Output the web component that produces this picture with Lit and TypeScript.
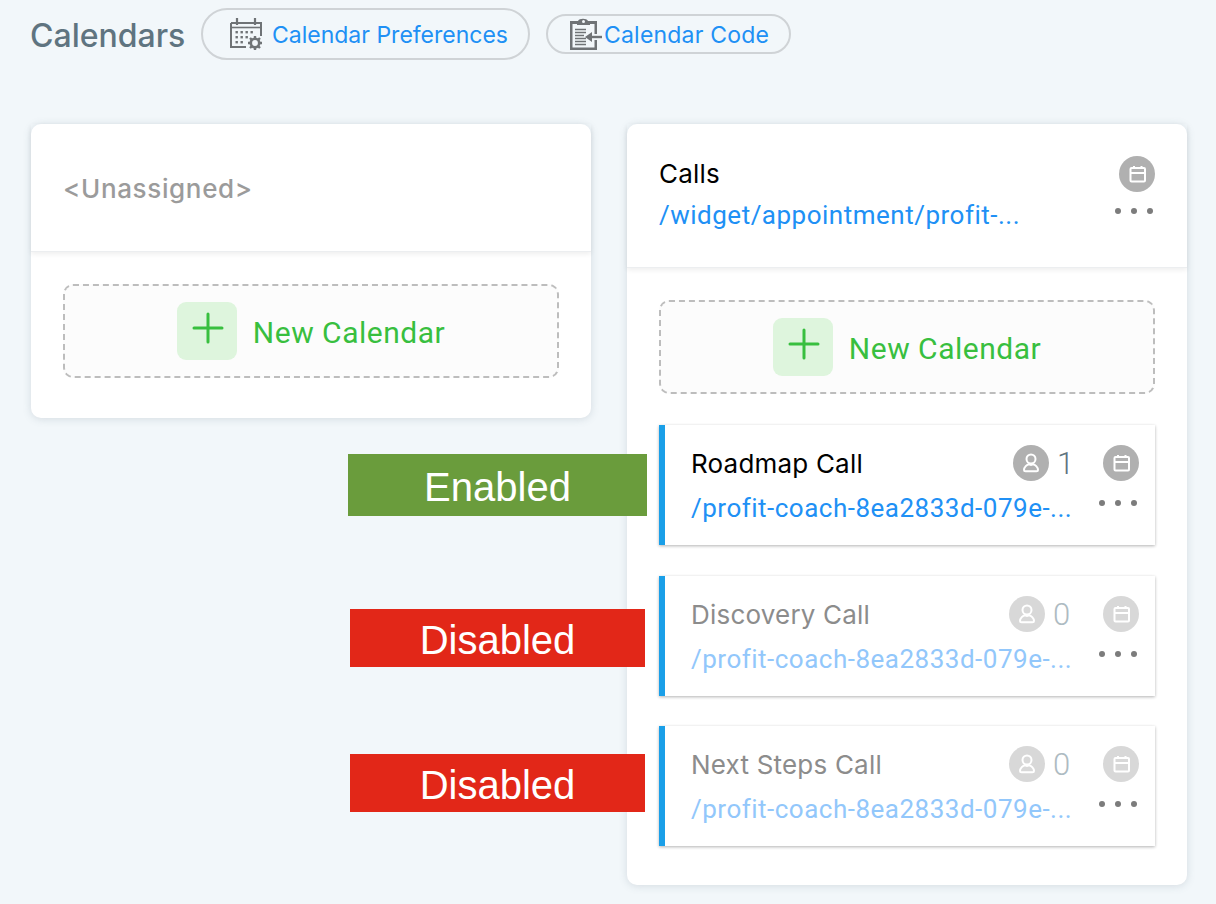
import { LitElement, html, css, svg } from "lit";
import { customElement } from "lit/decorators.js";

const calGlyph = svg`<rect x="11.5" y="12" width="14.500" height="13.500" rx="1" fill="none" stroke="#fff" stroke-width="2"/><path d="M11.5 17h14.500" stroke="#fff" stroke-width="2"/><path d="M15 10v3M22.500 10v3" stroke="#fff" stroke-width="2"/>`;

const calCircle = html`<svg class="circle" viewBox="0 0 36 36"><circle cx="18" cy="18" r="18" class="disc"/>${calGlyph}</svg>`;
const personCircle = html`<svg class="circle" viewBox="0 0 36 36"><circle cx="18" cy="18" r="18" class="disc"/><circle cx="18" cy="14" r="4.500" fill="none" stroke="#fff" stroke-width="2"/><path d="M11 25c0-3 3-5.500 5-5.800l2 .8 2-.8c2 .3 5 2.800 5 5.800 0 .8-.8 1.200-1.500 1.200h-11c-.7 0-1.500-.4-1.500-1.200z" fill="none" stroke="#fff" stroke-width="2"/></svg>`;
const dots = html`<svg class="dots" viewBox="0 0 38 6"><circle cx="3" cy="3" r="3"/><circle cx="19" cy="3" r="3"/><circle cx="35" cy="3" r="3"/></svg>`;

const gridDots: number[][] = [];
for (let r = 0; r < 3; r++) for (let c = 0; c < 4; c++) if (!(r === 2 && c > 1) && !(r === 1 && c > 2)) gridDots.push([5.5 + c * 5, 13 + r * 5]);

const prefIcon = html`<svg class="pref" viewBox="0 0 33 32" width="33" height="32">
  <path d="M1 5h30v13M1 5v24h15" fill="none" stroke="#6f7376" stroke-width="2"/>
  <path d="M1 9.500h30" stroke="#6f7376" stroke-width="1.600"/>
  <path d="M7 0v7M25 0v7" stroke="#6f7376" stroke-width="2.200"/>
  ${gridDots.map((p) => svg`<rect x="${p[0]}" y="${p[1]}" width="2.400" height="2.400" fill="#6f7376"/>`)}
  <circle cx="25" cy="25" r="4.200" fill="none" stroke="#6f7376" stroke-width="2.600"/>
  <path d="M25 18v3M25 29v3M18 25h3M29 25h3M20 20l2.200 2.200M27.800 27.800l2.200 2.200M30 20l-2.200 2.200M22.200 27.800L20 30" stroke="#6f7376" stroke-width="2.400"/>
</svg>`;

const codeIcon = html`<svg class="code" viewBox="0 0 33 32" width="33" height="32">
  <path d="M0 3h8c1-3 9-3 10 0h9v13h-2.500V6H2.500v23.500h22V22H27v10H0z" fill="#6f7376"/>
  <path d="M7 3h13v4H7z" fill="#6f7376"/>
  <circle cx="13.500" cy="3.500" r="1.500" fill="#f2f7fa"/>
  <path d="M5 11.500h11M5 14.500h11M5 17.500h9M5 20.500h11M5 23.500h11M5 26.500h11" stroke="#6f7376" stroke-width="1.400"/>
  <path d="M19 19h13" stroke="#6f7376" stroke-width="2.400"/>
  <path d="M15 19l7-5v10z" fill="#6f7376"/>
</svg>`;

@customElement("app-root")
export class AppRoot extends LitElement {
  static styles = css`
    :host {
      display: block;
      position: relative;
      width: 1216px;
      height: 904px;
      overflow: hidden;
      background: #f2f7fa;
      font-family: Inter, "Liberation Sans", sans-serif;
    }
    .top {
      display: flex;
      align-items: center;
      height: 52px;
      padding: 8px 0 0 30px;
    }
    h1 {
      margin: 2px 16px 0 0;
      font-size: 32px;
      font-weight: 500;
      color: #5f7480;
      font-family: Inter, sans-serif;
      width: 155px;
      white-space: nowrap;
    }
    .pill {
      display: flex;
      align-items: center;
      box-sizing: border-box;
      border: 2px solid #cfd3d6;
      border-radius: 30px;
      color: #2090f5;
      font-size: 23px;
      white-space: nowrap;
    }
    .pill span {
      margin-top: 2px;
    }
    .pill.a {
      width: 329px;
      height: 52px;
      padding-left: 27px;
      gap: 9px;
    }
    .pill.b {
      width: 245px;
      height: 40px;
      margin-left: 16px;
      padding-left: 22px;
      gap: 1px;
      letter-spacing: 0.2px;
    }
    .cols {
      display: grid;
      grid-template-columns: 560px 560px;
      gap: 36px;
      align-items: start;
      padding: 64px 0 0 31px;
    }
    .card {
      background: #fff;
      border-radius: 10px;
      box-shadow: 0 1px 8px rgba(90, 110, 125, 0.2);
    }
    .head {
      box-sizing: border-box;
      display: flex;
      padding: 0 32px;
      border-bottom: 1px solid #eceef0;
      box-shadow: 0 2px 5px rgba(0, 0, 0, 0.07);
    }
    .head.short {
      height: 128px;
      align-items: center;
    }
    .head.tall {
      height: 144px;
      align-items: flex-start;
      padding-top: 32px;
    }
    .unassigned {
      font-size: 26px;
      font-weight: 500;
      letter-spacing: 0.65px;
      color: #9b9b9b;
      margin-top: 2px;
    }
    .body {
      padding: 32px 32px 40px;
      display: flex;
      flex-direction: column;
      gap: 31px;
    }
    .body.tall {
      padding-bottom: 39px;
    }
    .new {
      box-sizing: border-box;
      height: 94px;
      border: 2px dashed #bdbdbd;
      border-radius: 10px;
      background: #fcfcfc;
      display: flex;
      align-items: center;
      justify-content: center;
      gap: 16px;
      color: #38bf3f;
      font-family: Roboto, sans-serif;
      font-size: 30px;
      letter-spacing: 0.5px;
    }
    .new span {
      margin-top: 2px;
    }
    .plus {
      width: 60px;
      height: 58px;
      border-radius: 9px;
      background: #def5dd;
      display: block;
    }
    .text {
      flex: 1;
      min-width: 0;
      display: flex;
      flex-direction: column;
    }
    .title {
      font-size: 26px;
      line-height: 30px;
      font-weight: 400;
      letter-spacing: 0.2px;
      color: #000;
      white-space: nowrap;
    }
    .link {
      font-family: Roboto, sans-serif;
      font-size: 26px;
      letter-spacing: 0.5px;
      line-height: 32px;
      color: #2090f5;
      white-space: nowrap;
    }
    .head .text {
      gap: 10px;
      margin-top: 3px;
    }
    .side {
      display: flex;
      flex-direction: column;
      align-items: flex-end;
      gap: 16px;
    }
    .item .side {
      gap: 19px;
    }
    .circle {
      width: 36px;
      height: 36px;
      display: block;
    }
    .disc {
      fill: #b0b0b0;
    }
    .dots {
      width: 38px;
      height: 6px;
      display: block;
      fill: #7c7c7c;
      margin-right: 2px;
    }
    .items {
      display: flex;
      flex-direction: column;
      gap: 30px;
    }
    .item {
      box-sizing: border-box;
      height: 120px;
      display: flex;
      border-left: 6px solid #1a9fe8;
      padding: 20px 16px 0 26px;
      box-shadow: 0 1px 3px rgba(0, 0, 0, 0.3);
      background: #fff;
    }
    .item:first-child {
      margin-bottom: 1px;
    }
    .item .text {
      gap: 13px;
      padding-top: 4px;
    }
    .meta {
      display: flex;
      align-items: flex-start;
    }
    .count {
      display: flex;
      align-items: center;
      gap: 8px;
      width: 90px;
      height: 36px;
      font-family: Roboto, sans-serif;
      font-size: 31px;
      font-weight: 300;
      color: #5f7480;
    }
    .off .title {
      color: #8c8c8c;
    }
    .off .link {
      color: #92c7fb;
    }
    .off .disc {
      fill: #d8d8d8;
    }
    .off .count {
      color: #aebbc2;
      margin-left: -4px;
      width: 94px;
    }
    .tag {
      position: absolute;
      box-sizing: border-box;
      display: flex;
      align-items: center;
      justify-content: center;
      padding-top: 4px;
      color: #fff;
      font-family: "Liberation Sans", Arial, sans-serif;
      font-size: 40px;
    }
    .tag.on {
      left: 348px;
      top: 454px;
      width: 299px;
      height: 62px;
      background: #6a9c3c;
    }
    .tag.no {
      left: 350px;
      width: 295px;
      height: 58px;
      background: #e22718;
    }
    .tag.n1 {
      top: 609px;
    }
    .tag.n2 {
      top: 754px;
    }
  `;

  private renderNew() {
    return html`<div class="new">
      <svg class="plus" viewBox="0 0 60 58">
        <path d="M31 12v28M17 26h28" stroke="#38bf3f" stroke-width="3" stroke-linecap="round" fill="none"/>
      </svg>
      <span>New Calendar</span>
    </div>`;
  }

  private renderItem(name: string, count: number, off: boolean) {
    return html`<div class="item ${off ? "off" : ""}">
      <div class="text">
        <div class="title">${name}</div>
        <div class="link">/profit-coach-8ea2833d-079e-...</div>
      </div>
      <div class="side">
        <div class="meta">
          <div class="count">${personCircle}<span>${count}</span></div>
          ${calCircle}
        </div>
        ${dots}
      </div>
    </div>`;
  }

  render() {
    return html`
      <div class="top">
        <h1>Calendars</h1>
        <div class="pill a">${prefIcon}<span>Calendar Preferences</span></div>
        <div class="pill b">${codeIcon}<span>Calendar Code</span></div>
      </div>
      <div class="cols">
        <section class="card">
          <div class="head short"><div class="unassigned">&lt;Unassigned&gt;</div></div>
          <div class="body">${this.renderNew()}</div>
        </section>
        <section class="card">
          <div class="head tall">
            <div class="text">
              <div class="title">Calls</div>
              <div class="link">/widget/appointment/profit-...</div>
            </div>
            <div class="side">${calCircle}${dots}</div>
          </div>
          <div class="body tall">
            ${this.renderNew()}
            <div class="items">
              ${this.renderItem("Roadmap Call", 1, false)}
              ${this.renderItem("Discovery Call", 0, true)}
              ${this.renderItem("Next Steps Call", 0, true)}
            </div>
          </div>
        </section>
      </div>
      <div class="tag on">Enabled</div>
      <div class="tag no n1">Disabled</div>
      <div class="tag no n2">Disabled</div>
    `;
  }
}
